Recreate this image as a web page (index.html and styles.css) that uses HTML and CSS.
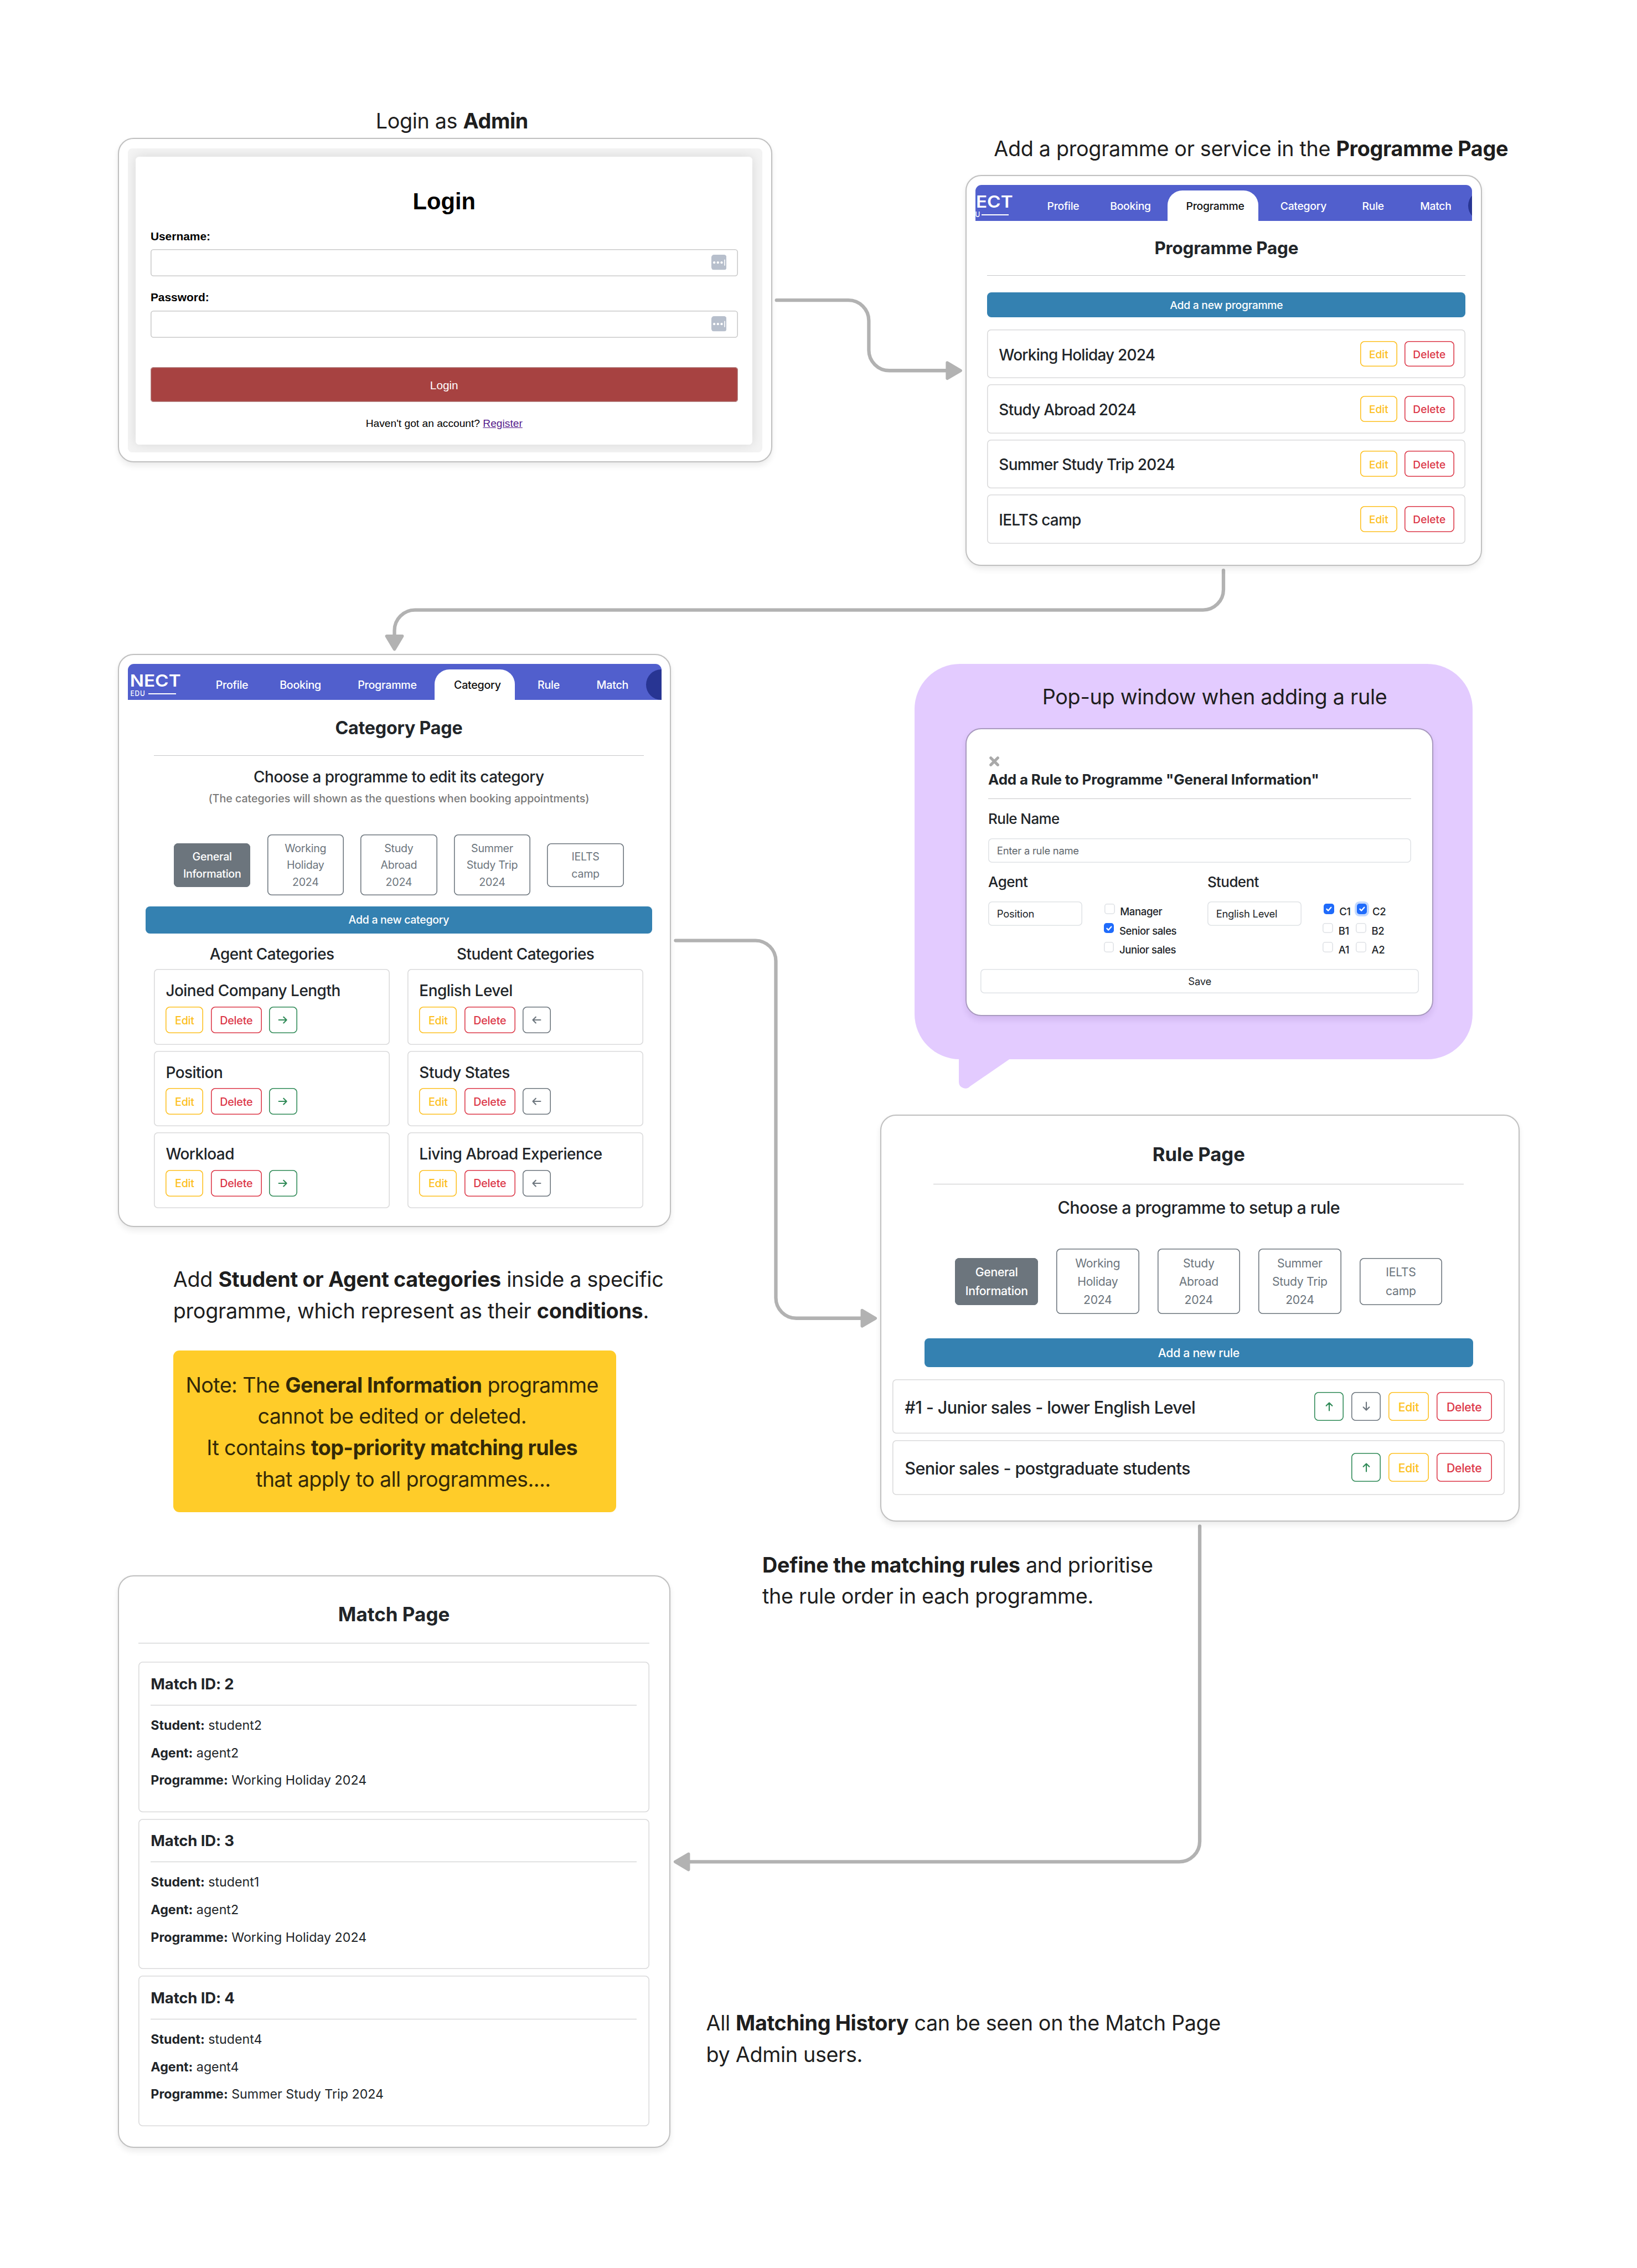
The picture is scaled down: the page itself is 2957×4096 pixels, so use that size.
FILE: index.html
```html
<!DOCTYPE html>
<html lang="en">
<head>
<meta charset="utf-8">
<title>Admin user flow</title>
<link rel="stylesheet" href="styles.css">
</head>
<body>
<svg class="defs" width="0" height="0">
  <symbol id="arrow" viewBox="0 0 22 22"><path d="M2 11H19M12.5 4.5L19 11L12.5 17.5" fill="none" stroke="currentColor" stroke-width="2.6" stroke-linecap="round" stroke-linejoin="round"/></symbol>
  <symbol id="vault" viewBox="0 0 35 35"><rect width="35" height="35" rx="6" fill="#b7bfcc"/><circle cx="6.5" cy="18" r="2.7" fill="#fff"/><circle cx="15" cy="18" r="2.7" fill="#fff"/><circle cx="23.5" cy="18" r="2.7" fill="#fff"/><path d="M30.5 11V25" stroke="#fff" stroke-width="2"/></symbol>
</svg>
<main class="board">

  <svg class="connectors" viewBox="0 0 3758 5205">
    <g class="lines">
      <path d="M1782.700 689H1947.400A47 47 0 0 1 1994.400 736V803.500A47 47 0 0 0 2041.400 850.500H2175"/>
      <path d="M2808.500 1309V1353A47 47 0 0 1 2761.500 1400H952.500A47 47 0 0 0 905.500 1447V1460"/>
      <path d="M1551 2158.500H1734A47 47 0 0 1 1781 2205.500V2978.500A47 47 0 0 0 1828 3025.500H1980"/>
      <path d="M2754 3503V4226A47 47 0 0 1 2707 4273H1580"/>
    </g>
    <g class="heads">
      <path d="M2174.500 832.500L2205 850.500L2174.500 868.500Z"/>
      <path d="M887.500 1460L923.500 1460L905.500 1490Z"/>
      <path d="M1979 3007.500L2009.500 3025.500L1979 3043.500Z"/>
      <path d="M1580.500 4255L1550 4273L1580.500 4291Z"/>
    </g>
  </svg>

  <p class="caption cap-login">Login as <b>Admin</b></p>
  <section class="panel login">
    <div class="login-frame">
      <form class="login-card">
        <h1>Login</h1>
        <label>Username:</label>
        <div class="field"><svg><use href="#vault"/></svg></div>
        <label>Password:</label>
        <div class="field"><svg><use href="#vault"/></svg></div>
        <div class="submit">Login</div>
        <p>Haven't got an account? <a>Register</a></p>
      </form>
    </div>
  </section>

  <p class="caption cap-programme">Add a programme or service in the <b>Programme Page</b></p>
  <section class="panel programme">
    <nav class="nav">
      <div class="logo"><span class="brand">ECT</span><span class="edu"><i>U</i><s></s></span></div>
      <span class="n1">Profile</span><span class="n2">Booking</span><span class="n3 tab">Programme</span><span class="n4">Category</span><span class="n5">Rule</span><span class="n6">Match</span><em></em>
    </nav>
    <div class="content">
      <h2>Programme Page</h2>
      <hr>
      <div class="add">Add a new programme</div>
      <div class="rows">
        <div class="row"><h3>Working Holiday 2024</h3><span class="btn edit">Edit</span><span class="btn del">Delete</span></div>
        <div class="row"><h3>Study Abroad 2024</h3><span class="btn edit">Edit</span><span class="btn del">Delete</span></div>
        <div class="row"><h3>Summer Study Trip 2024</h3><span class="btn edit">Edit</span><span class="btn del">Delete</span></div>
        <div class="row"><h3>IELTS camp</h3><span class="btn edit">Edit</span><span class="btn del">Delete</span></div>
      </div>
    </div>
  </section>

  <section class="panel category">
    <nav class="nav">
      <div class="logo"><span class="brand">NECT</span><span class="edu"><i>EDU</i><s></s></span></div>
      <span class="n1">Profile</span><span class="n2">Booking</span><span class="n3">Programme</span><span class="n4 tab">Category</span><span class="n5">Rule</span><span class="n6">Match</span><em></em>
    </nav>
    <div class="content">
      <h2>Category Page</h2>
      <hr>
      <h3 class="choose">Choose a programme to edit its category</h3>
      <p class="hint">(The categories will shown as the questions when booking appointments)</p>
      <div class="choices">
        <span class="on">General<br>Information</span><span>Working<br>Holiday<br>2024</span><span>Study<br>Abroad<br>2024</span><span>Summer<br>Study Trip<br>2024</span><span>IELTS<br>camp</span>
      </div>
      <div class="add">Add a new category</div>
      <div class="columns">
        <div class="column">
          <h3>Agent Categories</h3>
          <div class="item"><h3>Joined Company Length</h3><div class="actions"><span class="btn edit">Edit</span><span class="btn del">Delete</span><span class="btn go"><svg><use href="#arrow"/></svg></span></div></div>
          <div class="item"><h3>Position</h3><div class="actions"><span class="btn edit">Edit</span><span class="btn del">Delete</span><span class="btn go"><svg><use href="#arrow"/></svg></span></div></div>
          <div class="item"><h3>Workload</h3><div class="actions"><span class="btn edit">Edit</span><span class="btn del">Delete</span><span class="btn go"><svg><use href="#arrow"/></svg></span></div></div>
        </div>
        <div class="column">
          <h3>Student Categories</h3>
          <div class="item"><h3>English Level</h3><div class="actions"><span class="btn edit">Edit</span><span class="btn del">Delete</span><span class="btn back"><svg class="left"><use href="#arrow"/></svg></span></div></div>
          <div class="item"><h3>Study States</h3><div class="actions"><span class="btn edit">Edit</span><span class="btn del">Delete</span><span class="btn back"><svg class="left"><use href="#arrow"/></svg></span></div></div>
          <div class="item"><h3>Living Abroad Experience</h3><div class="actions"><span class="btn edit">Edit</span><span class="btn del">Delete</span><span class="btn back"><svg class="left"><use href="#arrow"/></svg></span></div></div>
        </div>
      </div>
    </div>
  </section>

  <section class="bubble">
    <svg class="tail" viewBox="0 0 116 70"><path d="M0 0H116L26 62A15 15 0 0 1 0 52Z" fill="#e3cbff"/></svg>
    <p class="bubble-title">Pop-up window when adding a rule</p>
    <div class="dialog">
      <svg class="close" viewBox="0 0 23 23"><path d="M3.500 3.500L19.500 19.500M19.500 3.500L3.500 19.500" stroke="#a9a9a9" stroke-width="6.500" stroke-linecap="round"/></svg>
      <h4>Add a Rule to Programme "General Information"</h4>
      <hr>
      <h5>Rule Name</h5>
      <div class="input placeholder">Enter a rule name</div>
      <div class="sides">
        <div class="side">
          <h5>Agent</h5>
          <div class="pick">
            <div class="input">Position</div>
            <div class="checks">
              <div class="first"><label><i></i>Manager</label></div>
              <div><label><i class="ck"><svg viewBox="0 0 24 24"><path d="M7 12.500L10.500 16L17 8.500"/></svg></i>Senior sales</label></div>
              <div><label><i></i>Junior sales</label></div>
            </div>
          </div>
        </div>
        <div class="side">
          <h5>Student</h5>
          <div class="pick">
            <div class="input">English Level</div>
            <div class="checks">
              <div class="first"><label><i class="ck"><svg viewBox="0 0 24 24"><path d="M7 12.500L10.500 16L17 8.500"/></svg></i>C1</label><label><i class="ck focus"><svg viewBox="0 0 24 24"><path d="M7 12.500L10.500 16L17 8.500"/></svg></i>C2</label></div>
              <div><label><i></i>B1</label><label><i></i>B2</label></div>
              <div><label><i></i>A1</label><label><i></i>A2</label></div>
            </div>
          </div>
        </div>
      </div>
      <div class="save">Save</div>
    </div>
  </section>

  <section class="panel rule">
    <h2>Rule Page</h2>
    <hr>
    <h3 class="choose">Choose a programme to setup a rule</h3>
    <div class="choices">
      <span class="on">General<br>Information</span><span>Working<br>Holiday<br>2024</span><span>Study<br>Abroad<br>2024</span><span>Summer<br>Study Trip<br>2024</span><span>IELTS<br>camp</span>
    </div>
    <div class="add">Add a new rule</div>
    <div class="rows">
      <div class="row"><h3>#1 - Junior sales - lower English Level</h3><span class="btn go"><svg class="up"><use href="#arrow"/></svg></span><span class="btn back"><svg class="down"><use href="#arrow"/></svg></span><span class="btn edit">Edit</span><span class="btn del">Delete</span></div>
      <div class="row"><h3>Senior sales - postgraduate students</h3><span class="btn go"><svg class="up"><use href="#arrow"/></svg></span><span class="btn edit">Edit</span><span class="btn del">Delete</span></div>
    </div>
  </section>

  <p class="caption cap-category">Add <b>Student or Agent categories</b> inside a specific<br>programme, which represent as their <b>conditions</b>.</p>
  <p class="note">Note: The <b>General Information</b> programme<br>cannot be edited or deleted.<br>It contains <b>top-priority matching rules</b><br>&nbsp;&nbsp;&nbsp;&nbsp;that apply to all programmes....</p>
  <p class="caption cap-rule"><b>Define the matching rules</b> and prioritise<br>the rule order in each programme.</p>

  <section class="panel match">
    <h2>Match Page</h2>
    <hr>
    <div class="matches">
      <article><h4>Match ID: 2</h4><hr><p><b>Student:</b> student2</p><p><b>Agent:</b> agent2</p><p><b>Programme:</b> Working Holiday 2024</p></article>
      <article><h4>Match ID: 3</h4><hr><p><b>Student:</b> student1</p><p><b>Agent:</b> agent2</p><p><b>Programme:</b> Working Holiday 2024</p></article>
      <article><h4>Match ID: 4</h4><hr><p><b>Student:</b> student4</p><p><b>Agent:</b> agent4</p><p><b>Programme:</b> Summer Study Trip 2024</p></article>
    </div>
  </section>
  <p class="caption cap-match">All <b>Matching History</b> can be seen on the Match Page<br>by Admin users.</p>
</main>
</body>
</html>
```
FILE: styles.css
```css
* { box-sizing: border-box; margin: 0; padding: 0; }
html, body { background: #fff; overflow: hidden; }
body { font-family: Inter, sans-serif; color: #212529; }
h1, h2, h3, h4, h5, p, span, label { white-space: nowrap; }
b { font-weight: 700; }
i { font-style: normal; }
.defs { position: absolute; }
hr { border: 0; height: 1.3px; margin-bottom: 0.7px; background: #c6c7c8; flex: none; }

/* Whiteboard canvas: items are pinned in board units and scaled together */
.board { position: relative; width: 3758px; height: 5205px; zoom: 0.7869; }

.connectors { position: absolute; left: 0; top: 0; width: 3758px; height: 5205px; }
.lines path { fill: none; stroke: #b2b2b2; stroke-width: 8; stroke-linecap: round; }
.heads path { fill: #b2b2b2; stroke: #b2b2b2; stroke-width: 7; stroke-linejoin: round; }

.caption { position: absolute; font-size: 48px; line-height: 72px; letter-spacing: -0.0095em; color: #1e1e1e; }
.cap-login { left: 862.5px; top: 241px; }
.cap-programme { left: 2281.5px; top: 304.5px; letter-spacing: -0.009em; }
.cap-category { left: 397.5px; top: 2900px; letter-spacing: -0.0085em; }
.cap-rule { left: 1750px; top: 3555.5px; letter-spacing: -0.009em; }
.cap-match { left: 1621px; top: 4607px; }

.panel { position: absolute; background: #fff; border: 3px solid #c0c0c0; border-radius: 36px; box-shadow: 0 8px 14px rgba(0, 0, 0, .07), 0 0 6px rgba(0, 0, 0, .04); }

/* Login */
.login { left: 271px; top: 316.5px; width: 1502px; height: 744.5px; padding: 21px 21px 19.5px 20px; font-family: "Liberation Sans", Arial, sans-serif; color: #000; }
.login-frame { height: 698px; padding: 20px 22px 18px 18px; background: #f3f3f3; border-radius: 10px; overflow: hidden; }
.login-card { height: 660px; padding: 72.6px 34px 0; background: #fff; border-radius: 8px; box-shadow: 0 0 26px rgba(0, 0, 0, .11); }
.login h1 { font-size: 53px; line-height: 60px; text-align: center; margin-bottom: 34.2px; }
.login label { display: block; font-size: 26.6px; font-weight: 700; line-height: 30px; margin-bottom: 14.8px; }
.field { display: flex; align-items: center; justify-content: flex-end; height: 62px; padding-right: 26px; box-shadow: inset 0 0 0 2px #cacaca; border-radius: 7px; margin-bottom: 34.2px; }
.field svg { width: 35px; height: 35px; }
.submit { height: 81px; line-height: 83px; margin-top: 67.5px; background: #a74241; box-shadow: inset 0 0 0 1.5px #b98e8e; border-radius: 7px; color: #fff; font-size: 26.4px; text-align: center; }
.login p { font-size: 24.4px; line-height: 30px; margin-top: 34px; text-align: center; }
.login a { color: #551a8b; text-decoration: underline; }

/* Navigation strip */
.nav { display: flex; position: relative; height: 82px; background: #515fcd; border-radius: 14px 14px 0 0; overflow: hidden; color: #fff; font-size: 24.6px; font-weight: 500; letter-spacing: -0.014em; }
.nav > span { flex: none; text-align: center; height: 70px; line-height: 70px; margin-top: 12px; padding-top: 2px; }
.nav .tab { background: #fff; color: #111; border-radius: 34px 34px 0 0; }
.nav em { flex: none; width: 70px; height: 70px; margin-top: 12px; border-radius: 50%; background: #283593; }
.logo { flex: none; display: flex; flex-direction: column; align-items: flex-end; padding-top: 23.5px; }
.brand { font-size: 38.5px; line-height: 30px; font-weight: 600; letter-spacing: 0; transform: scaleX(1.1); transform-origin: right; }
.edu { display: flex; align-items: center; gap: 7px; font-size: 17.5px; line-height: 20px; letter-spacing: .08em; margin: 5px 10px 0 0; }
.edu i { transform: scaleX(.86); transform-origin: right; }
.edu s { width: 64px; height: 2.5px; background: #fff; }

h2 { text-align: center; font-weight: 700; }
h3 { font-weight: 500; font-size: 35.5px; }
.add { background: #3481b1; border-radius: 10px; color: #fff; text-align: center; font-weight: 500; letter-spacing: -0.015em; }
.btn { flex: none; display: flex; align-items: center; justify-content: center; box-shadow: inset 0 0 0 2px currentColor; border-radius: 10px; padding-top: 2px; font-weight: 450; }
.btn svg { width: 23px; height: 23px; }
.edit { color: #fdc021; }
.del { color: #dc3848; }
.go { color: #2f8a57; }
.back { color: #6c757d; }
.left { transform: rotate(180deg); }
.up { transform: rotate(-90deg); }
.down { transform: rotate(90deg); }
.rows { display: flex; flex-direction: column; }
.row { display: flex; align-items: center; box-shadow: inset 0 0 0 2px #dadadb; border-radius: 9px; }
.row h3 { flex: 1; padding-top: 4px; }

/* Programme */
.programme { left: 2216.5px; top: 401.5px; width: 1185.5px; height: 897px; padding: 20.5px 20px 0 19.5px; }
.programme .logo { width: 86px; margin-right: 46px; }
.programme .edu { gap: 2px; margin-right: 9px; }
.programme .edu s { width: 62px; }
.programme .n1 { width: 140px; }
.programme .n2 { width: 169px; }
.programme .n3 { width: 209px; padding-left: 11px; }
.programme .n4 { width: 207px; }
.programme .n5 { width: 113px; }
.programme .n6 { width: 161.5px; padding-left: 13px; }
.programme .content { padding: 39px 15px 0 27.5px; }
.programme h2 { font-size: 40px; line-height: 50px; letter-spacing: -0.007em; margin-bottom: 36px; }
.programme .add { height: 57.5px; line-height: 60px; font-size: 24.6px; margin: 38.5px 0 27px; }
.programme .rows { gap: 13.8px; }
.programme .row { height: 112.6px; padding: 0 26px 0 27px; }
.programme .row h3 { letter-spacing: -0.027em; }
.programme .btn { height: 59.5px; font-size: 24.4px; }
.programme .edit { width: 84.5px; }
.programme .del { width: 115px; margin-left: 16.5px; }

/* Category */
.category { left: 271px; top: 1501px; width: 1269.5px; height: 1314.5px; padding: 20.5px 19.5px 0; }
.category .logo { width: 121.5px; margin-right: 45px; }
.category .nav { height: 82.5px; font-size: 25px; }
.category .n1 { width: 146px; }
.category .n2 { width: 168px; }
.category .n3 { width: 224px; padding-left: 7px; }
.category .n4 { width: 185px; padding-left: 12px; }
.category .n5 { width: 154px; }
.category .n6 { width: 146px; padding-right: 7px; }
.category .content { padding: 39px 21.5px 0 41px; }
.category h2 { font-size: 41px; line-height: 50px; letter-spacing: -0.007em; margin-bottom: 38px; }
.category .content > hr { margin: 0 19.5px 0.7px; }
.category h3 { letter-spacing: -0.018em; }
.choose { text-align: center; }
.category .choose { line-height: 44px; margin-top: 27px; }
.hint { margin-top: 10px; text-align: center; font-size: 25px; line-height: 34px; font-weight: 500; letter-spacing: -0.002em; color: #7a7a7a; }
.choices { display: flex; justify-content: center; align-items: center; color: #6c757d; text-align: center; letter-spacing: -0.015em; }
.choices span { box-shadow: inset 0 0 0 2px #6c757d; border-radius: 10px; }
.choices .on { background: #6c757d; color: #fff; font-weight: 500; }
.category .choices { margin-top: 66px; height: 139px; gap: 38.3px; font-size: 25px; line-height: 38.8px; }
.category .choices span { width: 176px; padding: 12px 0 10.6px; }
.category .add { margin-top: 26px; height: 61.6px; line-height: 63px; font-size: 24.8px; }
.columns { display: grid; grid-template-columns: 1fr 1fr; gap: 40.5px; margin: 26px 20px 0 19.5px; }
.column { display: flex; flex-direction: column; gap: 14.4px; }
.column > h3 { text-align: center; line-height: 44px; margin-bottom: -2.2px; }
.item { height: 173px; padding: 30.5px 27px 0; box-shadow: inset 0 0 0 2px #dadadb; border-radius: 9px; }
.item h3 { line-height: 40px; margin-bottom: 15.2px; }
.actions { display: flex; gap: 17px; }
.category .btn { height: 60.7px; font-size: 25px; letter-spacing: -0.01em; }
.category .edit { width: 86.4px; }
.category .del { width: 117px; }
.category .go, .category .back { width: 64px; padding: 0; }

/* Pop-up */
.bubble { position: absolute; left: 2099px; top: 1524px; width: 1281.7px; height: 907.5px; padding-top: 38.5px; background: #e3cbff; border-radius: 104px; }
.tail { position: absolute; left: 102px; top: 906.5px; width: 116px; height: 70px; }
.bubble-title { margin-left: 293.5px; font-size: 48px; line-height: 72px; letter-spacing: -0.008em; color: #1e1e1e; }
.dialog { display: flex; flex-direction: column; width: 1073.3px; height: 661.6px; margin: 36px 0 0 117.7px; padding: 62.5px 48px 0 49.3px; background: #fff; border: 3px solid #a99abf; border-radius: 36px; box-shadow: 0 8px 14px rgba(60, 20, 100, .1); }
.close { width: 23px; height: 23px; margin: 0 0 11px 2px; }
.dialog h4 { font-size: 33px; line-height: 40px; letter-spacing: -0.007em; margin-bottom: 23px; }
h5 { font-size: 33px; line-height: 40px; font-weight: 500; letter-spacing: -0.022em; }
.dialog > h5 { margin-top: 24.5px; }
.input { height: 56px; line-height: 58px; margin-top: 24.5px; padding-left: 20px; box-shadow: inset 0 0 0 2px #e0e3e6; border-radius: 9px; font-size: 23.4px; letter-spacing: -0.014em; }
.placeholder { color: #5f666c; }
.sides { display: flex; margin-top: 25px; }
.side { width: 503px; flex: none; }
.pick { display: flex; align-items: flex-start; }
.pick .input { width: 216px; flex: none; }
.checks { margin: 20.5px 0 0 49px; }
.checks > div { display: flex; height: 44px; align-items: center; }
.checks .first { padding-left: 1.8px; }
.checks label { display: flex; align-items: flex-start; min-width: 76px; height: 42px; padding-top: 8px; line-height: 36px; font-size: 23.6px; font-weight: 500; letter-spacing: -0.022em; }
.checks i { flex: none; width: 24px; height: 24px; margin-right: 12px; box-shadow: inset 0 0 0 2px #dfe2e6; border-radius: 6px; }
.checks .ck { background: #1f6bfb; box-shadow: none; }
.checks .ck svg { display: block; width: 24px; height: 24px; fill: none; stroke: #fff; stroke-width: 3; stroke-linecap: round; stroke-linejoin: round; }
.checks .focus { box-shadow: 0 0 0 5px #c4d9fd; }
.save { height: 56px; line-height: 58px; margin: 27.5px -18px 0; box-shadow: inset 0 0 0 2px #e0e3e6; border-radius: 9px; text-align: center; font-size: 23.4px; letter-spacing: -0.014em; }

/* Rule */
.rule { left: 2021px; top: 2558px; width: 1467px; height: 934px; padding: 61px 31px 0 25.4px; }
.rule h2 { font-size: 44px; line-height: 54px; }
.rule > hr { margin: 42px 94px 0.7px; }
.rule h3 { font-size: 38.8px; letter-spacing: -0.02em; }
.rule .choose { line-height: 46px; margin-top: 30px; }
.rule .choices { margin-top: 71px; height: 149.8px; gap: 42px; font-size: 27px; line-height: 42px; }
.rule .choices span { width: 190px; padding: 12.6px 0 11.4px; }
.rule .add { margin: 56px 73px 28px; height: 66px; line-height: 68px; font-size: 27px; }
.rule .rows { gap: 15px; }
.rule .row { height: 125px; padding: 0 30px 0 28px; gap: 18px; }
.rule .row h3 { padding-top: 2.5px; }
.rule .btn { height: 66px; font-size: 27px; letter-spacing: -0.012em; }
.rule .edit { width: 92px; }
.rule .del { width: 127px; }
.rule .go, .rule .back { width: 67px; padding: 0; }

.note { position: absolute; left: 398px; top: 3100px; width: 1017px; height: 370px; padding: 42.5px 13px 0 0; background: #ffcc29; border-radius: 14px; font-size: 48px; line-height: 72px; letter-spacing: -0.0165em; text-align: center; color: #332908; }

/* Match */
.match { left: 271px; top: 3615.5px; width: 1268px; height: 1314.5px; padding: 60px 46px 0 44.6px; }
.match h2 { font-size: 44.5px; line-height: 54px; margin-bottom: 39px; }
.matches { display: flex; flex-direction: column; gap: 15.3px; margin-top: 42px; }
.match article { height: 345px; padding: 28px 29px 0 28px; box-shadow: inset 0 0 0 2px #dadadb; border-radius: 10px; }
.match h4 { font-size: 35px; line-height: 44px; letter-spacing: -0.006em; margin-bottom: 26px; }
.match article hr { margin-bottom: 15.7px; }
.match p { font-size: 29.5px; line-height: 63.2px; }
```
